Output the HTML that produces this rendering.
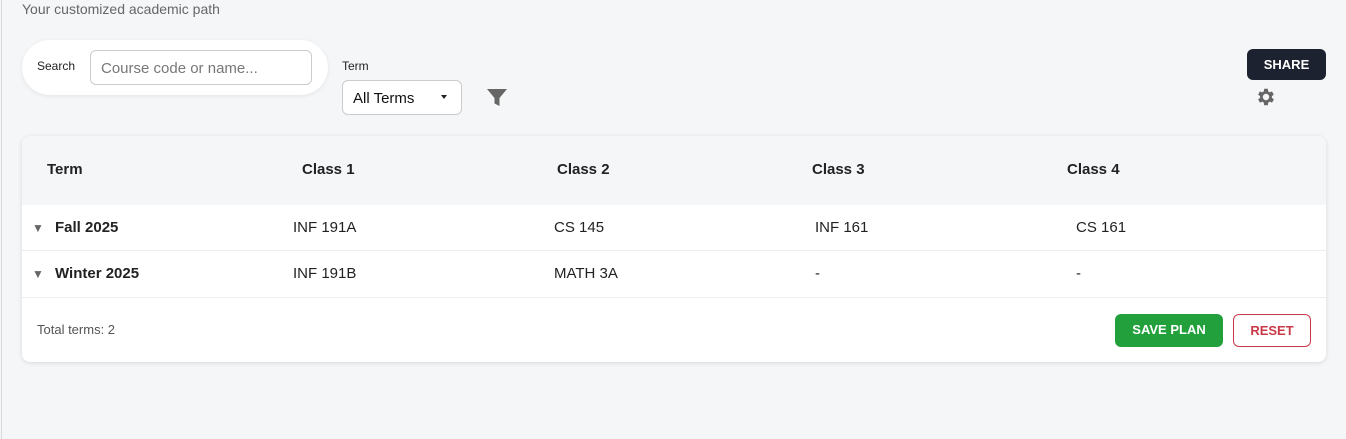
<!DOCTYPE html>
<html><head><style>
*{box-sizing:border-box;margin:0;padding:0}
body{width:1346px;height:439px;background:#f5f6f8;font-family:"Liberation Sans",sans-serif;position:relative;overflow:hidden}
.abs{position:absolute}
.sub{left:22px;top:1px;font-size:14px;color:#666}
.searchbox{left:22px;top:40px;width:306px;height:55px;background:#fff;border-radius:28px;box-shadow:0 1px 4px rgba(0,0,0,.08)}
.lbl{font-size:12px;color:#222}
.inp{left:90px;top:50px;width:222px;height:35px;border:1px solid #ccc;border-radius:6px;background:#fff;font-size:15px;color:#777;padding:9px 10px}
.sel{left:342px;top:80px;width:120px;height:35px;border:1px solid #ccc;border-radius:6px;background:#fff;font-size:15px;color:#111;padding:9px 10px}
.share{left:1247px;top:49px;width:79px;height:31px;background:#1c2230;color:#fff;border-radius:6px;font-size:13px;font-weight:bold;text-align:center;line-height:31px}
.card{left:22px;top:136px;width:1304px;height:226px;background:#fff;border-radius:8px;box-shadow:0 1px 5px rgba(0,0,0,.12);overflow:hidden}
.head{position:absolute;left:0;top:0;width:100%;height:69px;background:#f5f6f8}
.th{position:absolute;top:25px;font-size:15px;font-weight:bold;color:#222}
.td{position:absolute;font-size:15px;color:#222}
.b{font-weight:bold}
.line{position:absolute;left:0;width:100%;height:1px;background:#eee}
.tri{position:absolute;font-size:12px;color:#666}
.btn{position:absolute;height:33px;border-radius:6px;font-size:13px;font-weight:bold;text-align:center;line-height:31px}
</style></head><body>
<div class="abs" style="left:1px;top:0;width:1px;height:439px;background:#d8d8d8"></div>
<div class="abs sub">Your customized academic path</div>
<div class="abs searchbox"></div>
<div class="abs lbl" style="left:37px;top:59px">Search</div>
<div class="abs inp">Course code or name...</div>
<div class="abs lbl" style="left:342px;top:59px">Term</div>
<div class="abs sel">All Terms<span style="position:absolute;right:14px;top:14px;border-left:3px solid transparent;border-right:3px solid transparent;border-top:4px solid #222"></span></div>
<svg class="abs" style="left:487px;top:88px" width="20" height="20" viewBox="0 0 20 20"><path d="M0 1h20l-7.5 9v8l-5-2.5v-5.5z" fill="#666"/></svg>
<div class="abs share">SHARE</div>
<svg class="abs" style="left:1255px;top:86px" width="22" height="22" viewBox="0 0 24 24"><path fill="#666" d="M19.4 13a7.8 7.8 0 000-2l2.1-1.6-2-3.5-2.5 1a7.6 7.6 0 00-1.7-1L15 3h-4l-.4 2.9a7.6 7.6 0 00-1.7 1l-2.5-1-2 3.5L6.6 11a7.8 7.8 0 000 2l-2.2 1.6 2 3.5 2.5-1a7.6 7.6 0 001.7 1L11 21h4l.4-2.9a7.6 7.6 0 001.7-1l2.5 1 2-3.5zM13 15.5a3.5 3.5 0 110-7 3.5 3.5 0 010 7z" transform="translate(-1 0)"/></svg>
<div class="abs card">
<div class="head"></div>
<div class="th" style="left:25px;top:25px">Term</div>
<div class="th" style="left:280px">Class 1</div>
<div class="th" style="left:535px">Class 2</div>
<div class="th" style="left:790px">Class 3</div>
<div class="th" style="left:1045px">Class 4</div>
<div class="tri" style="left:10px;top:85px">▼</div>
<div class="td b" style="left:33px;top:83px">Fall 2025</div>
<div class="td" style="left:271px;top:83px">INF 191A</div>
<div class="td" style="left:532px;top:83px">CS 145</div>
<div class="td" style="left:793px;top:83px">INF 161</div>
<div class="td" style="left:1054px;top:83px">CS 161</div>
<div class="line" style="top:114px"></div>
<div class="tri" style="left:10px;top:131px">▼</div>
<div class="td b" style="left:33px;top:129px">Winter 2025</div>
<div class="td" style="left:271px;top:129px">INF 191B</div>
<div class="td" style="left:532px;top:129px">MATH 3A</div>
<div class="td" style="left:793px;top:129px">-</div>
<div class="td" style="left:1054px;top:129px">-</div>
<div class="line" style="top:161px"></div>
<div class="td" style="left:15px;top:186px;font-size:13px;color:#555">Total terms: 2</div>
<div class="btn" style="left:1093px;top:178px;width:108px;background:#22a03c;color:#fff">SAVE PLAN</div>
<div class="btn" style="left:1211px;top:178px;width:78px;border:1px solid #c83a48;color:#c83a48;background:#fff">RESET</div>
</div>
</body></html>
